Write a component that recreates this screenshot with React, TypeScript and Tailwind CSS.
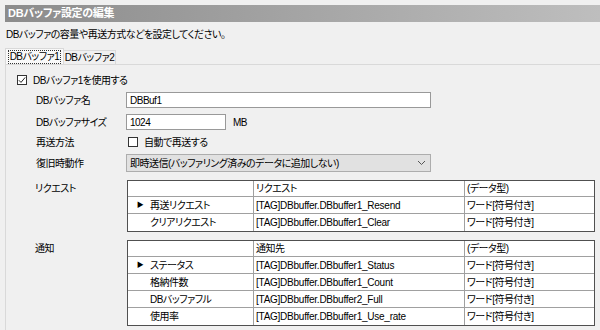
import React from "react";

const font = "font-['Liberation_Sans','Noto_Sans_CJK_JP',sans-serif] [font-feature-settings:'palt']";

type Row = { name: string; tag: string; type: string; current?: boolean };

const requests: Row[] = [
  { name: "再送リクエスト", tag: "[TAG]DBbuffer.DBbuffer1_Resend", type: "ワード[符号付き]", current: true },
  { name: "クリアリクエスト", tag: "[TAG]DBbuffer.DBbuffer1_Clear", type: "ワード[符号付き]" },
];

const notices: Row[] = [
  { name: "ステータス", tag: "[TAG]DBbuffer.DBbuffer1_Status", type: "ワード[符号付き]", current: true },
  { name: "格納件数", tag: "[TAG]DBbuffer.DBbuffer1_Count", type: "ワード[符号付き]" },
  { name: "DBバッファフル", tag: "[TAG]DBbuffer.DBbuffer2_Full", type: "ワード[符号付き]" },
  { name: "使用率", tag: "[TAG]DBbuffer.DBbuffer1_Use_rate", type: "ワード[符号付き]" },
];

function CheckBox({ checked }: { checked?: boolean }) {
  return (
    <span className="flex h-[10px] w-[10px] items-center justify-center border border-[#333] bg-white">
      {checked && (
        <svg width="8" height="8" viewBox="0 0 8 8">
          <path d="M0.8 4.2 L3 6.4 L7.2 1.4" fill="none" stroke="#222" strokeWidth="1" />
        </svg>
      )}
    </span>
  );
}

function Grid({ header, rows }: { header: string; rows: Row[] }) {
  return (
    <div className="w-[468px] border border-[#505050] bg-white text-black">
      <div className="flex h-[16px] border-b border-[#a0a0a0]">
        <div className="w-[126px] border-r border-[#a0a0a0]" />
        <div className="flex w-[211px] items-center border-r border-[#a0a0a0] pl-[2px]">{header}</div>
        <div className="flex flex-1 items-center pl-[2px]">(データ型)</div>
      </div>
      {rows.map((r, i) => (
        <div key={r.name} className={`flex h-[17px] ${i < rows.length - 1 ? "border-b border-[#a0a0a0]" : ""}`}>
          <div className="flex w-[126px] items-center border-r border-[#a0a0a0]">
            <span className="flex w-[22px] justify-center pl-[2px] text-[7px]">{r.current ? "▶" : ""}</span>
            <span>{r.name}</span>
          </div>
          <div className="flex w-[211px] items-center border-r border-[#a0a0a0] pl-[2px] text-[10px] tracking-[-0.25px]">
            {r.tag}
          </div>
          <div className="flex flex-1 items-center pl-[2px]">{r.type}</div>
        </div>
      ))}
    </div>
  );
}

export default function App() {
  return (
    <div className={`h-[330px] w-[600px] overflow-hidden bg-[#f0f0f0] pt-[5px] text-[10px] tracking-[-0.5px] text-black ${font}`}>
      <div className="ml-[5px] flex h-[17px] items-center bg-gradient-to-r from-[#8c8c8c] to-[#bebebe] pl-[3px] text-[11px] font-bold tracking-[-0.3px] text-white">
        DBバッファ設定の編集
      </div>

      <div className="flex h-[24px] items-center pl-[6px]">DBバッファの容量や再送方式などを設定してください。</div>

      <div className="flex h-[18px] items-end whitespace-nowrap pl-[5px]">
        <div className="flex h-[16px] w-[59px] items-center justify-center border border-b-0 border-[#d9d9d9] bg-[#f9f9f9]">
          <span className="border border-dotted border-[#333] px-[1px] leading-[12px]">DBバッファ1</span>
        </div>
        <div className="flex h-[14px] w-[52px] items-center justify-center border border-b-0 border-l-0 border-[#d9d9d9]">
          DBバッファ2
        </div>
      </div>

      <div className="ml-[5px] h-full border-l border-t border-[#d9d9d9] pt-[7px]">
        <div className="flex h-[16px] items-center gap-[6px] pl-[11px]">
          <CheckBox checked />
          <span>DBバッファ1を使用する</span>
        </div>

        <div className="mt-[4px] flex h-[16px] items-center pl-[30px]">
          <span className="w-[90px]">DBバッファ名</span>
          <div className="flex h-full w-[305px] items-center border border-[#999] bg-white pl-[3px]">DBBuf1</div>
        </div>

        <div className="mt-[6px] flex h-[16px] items-center pl-[30px]">
          <span className="w-[90px]">DBバッファサイズ</span>
          <div className="flex h-full w-[100px] items-center border border-[#999] bg-white pl-[3px]">1024</div>
          <span className="ml-[7px]">MB</span>
        </div>

        <div className="mt-[4px] flex h-[16px] items-center pl-[30px]">
          <span className="w-[92px]">再送方法</span>
          <CheckBox />
          <span className="ml-[6px]">自動で再送する</span>
        </div>

        <div className="mt-[4px] flex h-[18px] items-center pl-[30px]">
          <span className="w-[90px]">復旧時動作</span>
          <div className="flex h-full w-[305px] items-center justify-between border border-[#adadad] bg-[#e1e1e1] pl-[3px] pr-[4px]">
            <span>即時送信(バッファリング済みのデータに追加しない)</span>
            <svg width="9" height="6" viewBox="0 0 9 6">
              <path d="M1 1 L4.5 4.5 L8 1" fill="none" stroke="#555" strokeWidth="1" />
            </svg>
          </div>
        </div>

        <div className="mt-[8px] flex pl-[29px]">
          <span className="w-[92px] pt-[1px]">リクエスト</span>
          <Grid header="リクエスト" rows={requests} />
        </div>

        <div className="mt-[8px] flex pl-[29px]">
          <span className="w-[92px] pt-[1px]">通知</span>
          <Grid header="通知先" rows={notices} />
        </div>
      </div>
    </div>
  );
}
